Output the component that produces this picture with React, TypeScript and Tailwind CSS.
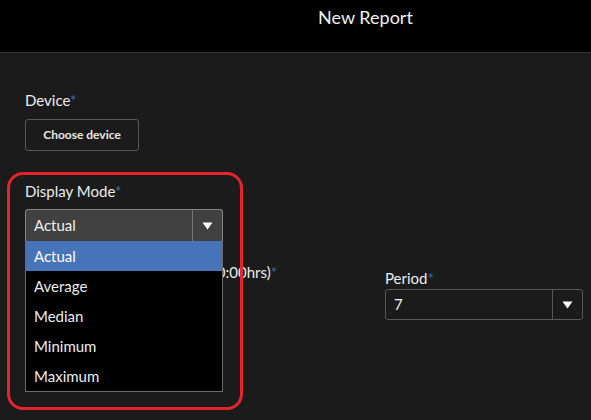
import { useState } from 'react';

const font = { fontFamily: 'Lato, "Noto Sans", sans-serif' };

const modes = ['Actual', 'Average', 'Median', 'Minimum', 'Maximum'];

const Caret = () => (
  <svg width="11" height="8" viewBox="0 0 11 8" className="fill-white">
    <path d="M0.5 0.5 L10.5 0.5 L5.5 7.5 Z" />
  </svg>
);

const Label = ({ text }: { text: string }) => (
  <div className="text-[15px] leading-[20px] text-[#ececec] whitespace-nowrap">
    {text}
    <span className="text-[#3c6fb8]">*</span>
  </div>
);

export default function App() {
  const [mode, setMode] = useState('Actual');

  return (
    <div
      className="relative w-[591px] h-[420px] bg-[#1b1b1b] overflow-hidden"
      style={font}
    >
      <header className="h-[53px] bg-black border-b border-[#333] flex justify-center pl-[140px] pt-[4px]">
        <h1 className="text-[18px] leading-[26px] text-[#f0f0f0]">New Report</h1>
      </header>

      <div className="px-[25px]">
        <div className="mt-[37px]">
          <Label text="Device" />
          <button className="mt-[9px] h-[32px] w-[114px] rounded-[3px] border border-[#575757] text-[12px] font-bold text-[#e8e8e8]">
            Choose device
          </button>
        </div>

        <div className="mt-[30px]">
          <Label text="Display Mode" />
          <div className="relative mt-[8px] w-[198px]">
            <div className="flex h-[32px] rounded-t-[3px] border border-[#858585] border-b-0 bg-[#404040]">
              <div className="flex-1 pl-[8px] text-[15px] leading-[31px] text-[#f2f2f2]">
                {mode}
              </div>
              <div className="w-[30px] border-l border-[#767676] flex items-center justify-center">
                <Caret />
              </div>
            </div>
            <ul className="absolute left-0 top-[32px] z-10 w-[198px] bg-black border border-t-0 border-[#6a6a6a]">
              {modes.map(m => (
                <li
                  key={m}
                  onClick={() => setMode(m)}
                  className={
                    m === mode
                      ? 'h-[30px] pl-[8px] text-[15px] leading-[30px] text-white bg-[#4774b8]'
                      : 'h-[30px] pl-[8px] text-[15px] leading-[30px] text-[#ececec]'
                  }
                >
                  {m}
                </li>
              ))}
            </ul>
          </div>
        </div>

        <div className="flex items-start">
          <div className="w-[360px] shrink-0 pt-[21px]">
            <Label text="Report Window Start Time (00:00hrs)" />
          </div>
          <div className="shrink-0 pt-[27px]">
            <Label text="Period" />
            <div className="mt-[1px] flex h-[31px] w-[198px] rounded-[3px] border border-[#575757]">
              <div className="flex-1 pl-[8px] text-[15px] leading-[29px] text-[#f2f2f2]">7</div>
              <div className="w-[30px] border-l border-[#575757] flex items-center justify-center">
                <Caret />
              </div>
            </div>
          </div>
        </div>
      </div>

      <div className="pointer-events-none absolute left-[7px] top-[172px] w-[236px] h-[238px] rounded-[16px] border-[3px] border-[#e8232b]" />
    </div>
  );
}
